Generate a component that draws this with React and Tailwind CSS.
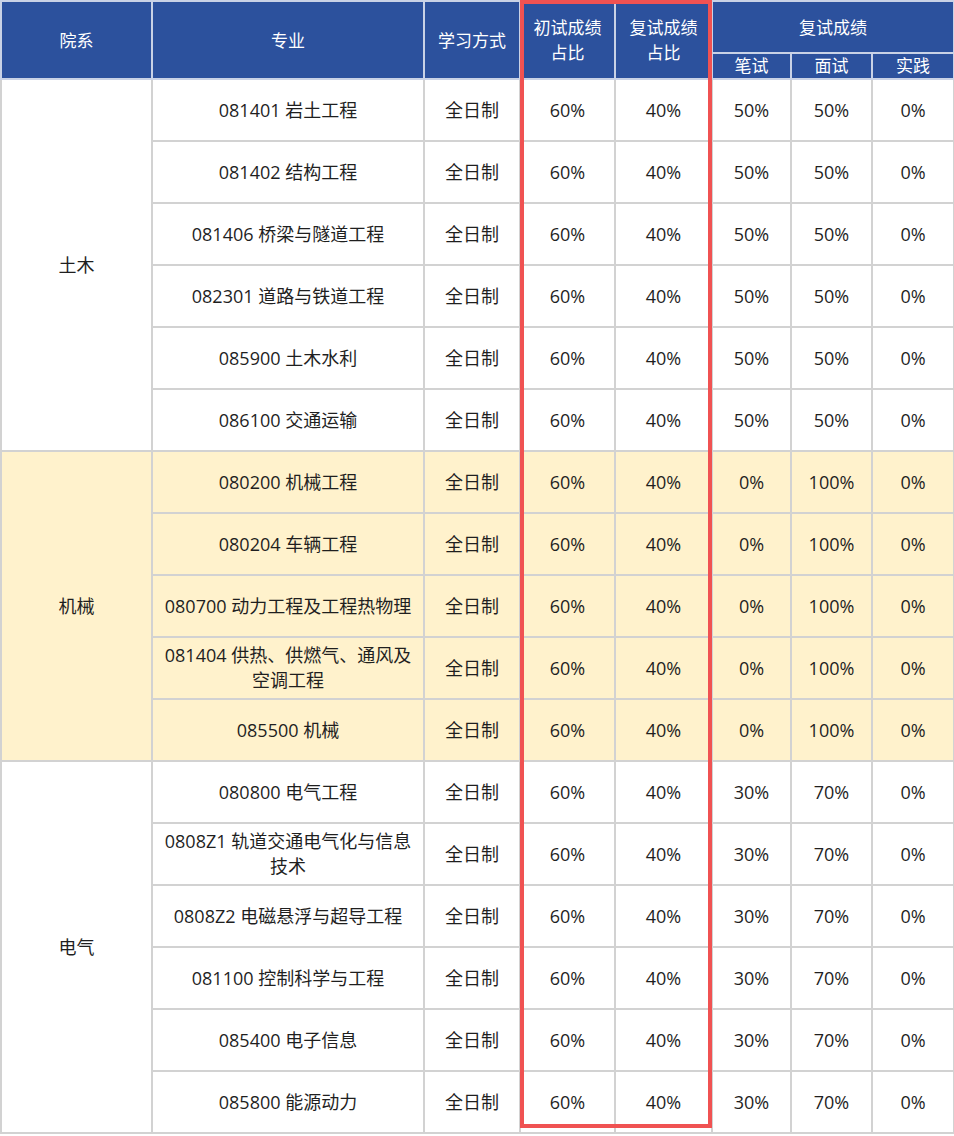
import React from 'react';

const groups = [
  {
    name: '土木',
    tone: 'bg-white',
    exam: ['50%', '50%', '0%'],
    majors: ['081401 岩土工程', '081402 结构工程', '081406 桥梁与隧道工程', '082301 道路与铁道工程', '085900 土木水利', '086100 交通运输'],
  },
  {
    name: '机械',
    tone: 'bg-[#fff2cc]',
    exam: ['0%', '100%', '0%'],
    majors: ['080200 机械工程', '080204 车辆工程', '080700 动力工程及工程热物理', '081404 供热、供燃气、通风及空调工程', '085500 机械'],
  },
  {
    name: '电气',
    tone: 'bg-white',
    exam: ['30%', '70%', '0%'],
    majors: ['080800 电气工程', '0808Z1 轨道交通电气化与信息技术', '0808Z2 电磁悬浮与超导工程', '081100 控制科学与工程', '085400 电子信息', '085800 能源动力'],
  },
];

const td = 'border-2 border-[#d2d2d2] text-center align-middle';
const th = 'border-2 border-[#c9d2e6] bg-[#2c519d] text-white font-normal text-center align-middle';

export default function App() {
  return (
    <div className="relative w-[954px] bg-white" style={{ fontFamily: '"Open Sans", "Noto Sans CJK SC", sans-serif' }}>
      <table className="w-[953px] table-fixed border-collapse text-[18px] leading-[25px] text-[#1f1f1f]">
        <colgroup>
          <col className="w-[151px]" />
          <col className="w-[272px]" />
          <col className="w-[96px]" />
          <col className="w-[95px]" />
          <col className="w-[97px]" />
          <col className="w-[79px]" />
          <col className="w-[81px]" />
          <col className="w-[82px]" />
        </colgroup>
        <thead className="text-[17px]">
          <tr className="h-[52px]">
            <th rowSpan={2} className={th}>院系</th>
            <th rowSpan={2} className={th}>专业</th>
            <th rowSpan={2} className={th}>学习方式</th>
            <th rowSpan={2} className={th}>初试成绩<br />占比</th>
            <th rowSpan={2} className={th}>复试成绩<br />占比</th>
            <th colSpan={3} className={th}>复试成绩</th>
          </tr>
          <tr className="h-[26px]">
            <th className={th + ' leading-[22px]'}>笔试</th>
            <th className={th + ' leading-[22px]'}>面试</th>
            <th className={th + ' leading-[22px]'}>实践</th>
          </tr>
        </thead>
        <tbody>
          {groups.map((g) =>
            g.majors.map((m, i) => (
              <tr key={m} className={'h-[62px] ' + g.tone}>
                {i === 0 && (
                  <td rowSpan={g.majors.length} className={td}>{g.name}</td>
                )}
                <td className={td + ' px-2'}>{m}</td>
                <td className={td}>全日制</td>
                <td className={td}>60%</td>
                <td className={td}>40%</td>
                <td className={td}>{g.exam[0]}</td>
                <td className={td}>{g.exam[1]}</td>
                <td className={td}>{g.exam[2]}</td>
              </tr>
            ))
          )}
        </tbody>
      </table>
      <div className="absolute left-[520px] top-0 h-[1128px] w-[192px] border-4 border-[#f05252]" />
    </div>
  );
}
